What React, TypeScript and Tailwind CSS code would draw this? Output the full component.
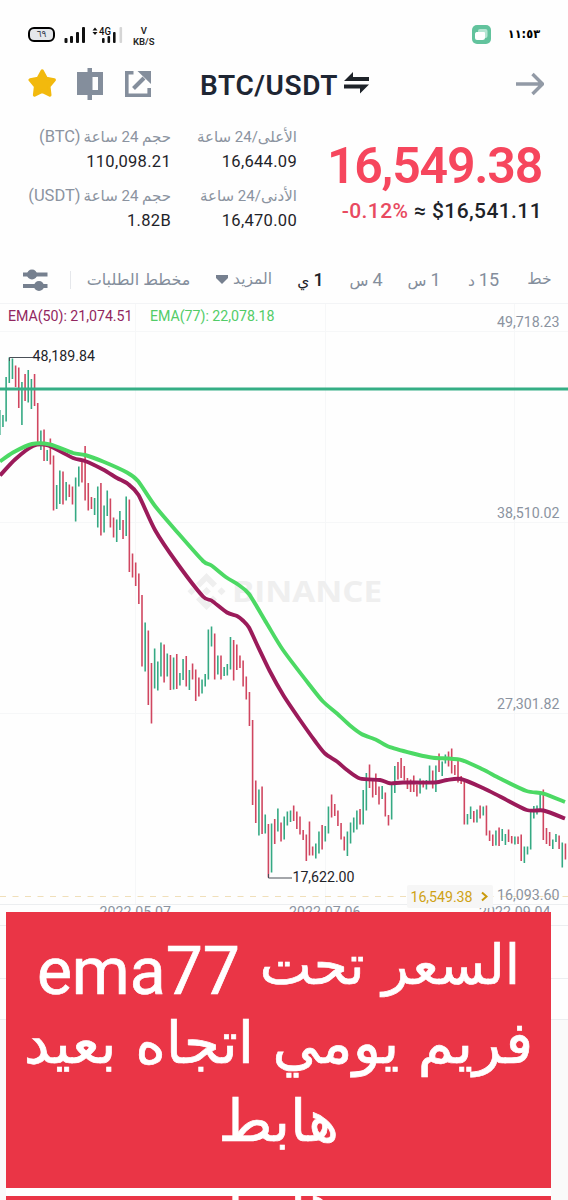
type Candle = [top: number, bottom: number, side: "g" | "r"];
type Point = [x: number, y: number];

const CANDLES: Candle[] = [
  [410, 435, "g"], [415, 427, "g"], [377, 421.5, "g"], [357.5, 383, "g"], [358.5, 379, "g"], [365.5, 387, "r"],
  [367.5, 408, "r"], [382, 425, "g"], [374, 401, "r"], [370, 402.5, "g"], [379, 409, "g"], [374, 406, "r"],
  [403, 442, "r"], [430.5, 450, "g"], [429.5, 461, "r"], [450, 461, "g"], [438.5, 464.5, "r"], [455.5, 510.5, "r"],
  [485, 509, "g"], [470.5, 504, "g"], [471.5, 504.5, "r"], [482, 500.5, "g"], [484.5, 497, "r"], [486.5, 504.5, "r"],
  [477.5, 521.5, "g"], [466.5, 486.5, "g"], [461.5, 482.5, "r"], [446, 500.5, "r"], [483, 510.5, "r"], [497, 509, "r"],
  [498, 515, "g"], [486.5, 527.5, "g"], [483, 535.5, "r"], [505.5, 532.5, "g"], [490.5, 516, "g"], [498.5, 527.5, "r"],
  [517.5, 537.5, "r"], [519.5, 542, "g"], [511, 530, "g"], [520, 539, "r"], [496.5, 536, "g"], [499.5, 572, "r"],
  [553.5, 577.5, "r"], [562.5, 586, "r"], [573.5, 604, "r"], [595, 666.5, "r"], [622.5, 671.5, "g"], [630.5, 705, "r"],
  [663, 723.5, "r"], [648.5, 688.5, "g"], [661.5, 690.5, "g"], [642.5, 676.5, "g"], [644.5, 682.5, "r"], [653.5, 676.5, "g"],
  [655, 690, "r"], [657.5, 689.5, "g"], [654, 689, "r"], [673, 685.5, "g"], [659, 680, "g"], [656, 686.5, "r"],
  [670, 690, "g"], [663.5, 679.5, "r"], [669.5, 701, "r"], [677.5, 696.5, "r"], [679.5, 693.5, "g"], [674, 686.5, "g"],
  [629.5, 679.5, "g"], [626.5, 646.5, "g"], [633.5, 679.5, "r"], [655.5, 674.5, "g"], [655.5, 679.5, "r"], [667, 676, "g"],
  [664, 675.5, "g"], [637, 669.5, "g"], [640, 680.5, "r"], [644.5, 670, "r"], [655.5, 668, "r"], [660.5, 686.5, "r"],
  [676.5, 699.5, "r"], [692, 726, "r"], [720, 805, "r"], [780.5, 823, "r"], [789.5, 835.5, "g"], [786.5, 834, "r"],
  [814.5, 833.5, "g"], [824, 877.5, "r"], [823.5, 872.5, "g"], [819, 844, "r"], [808.5, 831.5, "g"], [822.5, 841.5, "r"],
  [816.5, 839.5, "g"], [811.5, 825.5, "g"], [810.5, 822, "g"], [805.5, 821, "r"], [811.5, 829, "r"], [816.5, 834.5, "r"],
  [830, 840, "r"], [834.5, 861, "r"], [821.5, 855.5, "r"], [846.5, 855.5, "r"], [843.5, 858.5, "g"], [831.5, 853.5, "g"],
  [825, 849.5, "r"], [826, 841.5, "g"], [806.5, 833.5, "g"], [794.5, 817.5, "r"], [804, 816, "r"], [810.5, 826, "r"],
  [823, 839.5, "r"], [836.5, 850.5, "r"], [831.5, 856, "g"], [822.5, 843.5, "g"], [817.5, 832.5, "g"], [810.5, 829.5, "g"],
  [809, 824.5, "r"], [790, 824.5, "g"], [773, 810.5, "g"], [764.5, 788, "r"], [778.5, 797.5, "r"], [773.5, 795, "r"],
  [786.5, 804.5, "r"], [786, 799, "g"], [792.5, 816.5, "r"], [815, 825.5, "r"], [784, 819.5, "g"], [766, 793, "g"],
  [762, 779.5, "r"], [758, 778, "r"], [766, 780.5, "r"], [778, 789, "r"], [779.5, 792, "r"], [775.5, 792, "r"],
  [784.5, 796.5, "r"], [778.5, 793.5, "g"], [780.5, 787.5, "r"], [780, 789.5, "g"], [765.5, 784, "g"], [770.5, 788.5, "r"],
  [765.5, 792, "g"], [753.5, 772, "r"], [761.5, 776, "g"], [754.5, 763.5, "g"], [751.5, 766.5, "r"], [748.5, 773.5, "r"],
  [765, 775, "r"], [760.5, 782.5, "r"], [776, 784, "r"], [781.5, 824.5, "r"], [814, 824.5, "g"], [806.5, 819, "g"],
  [811, 822.5, "r"], [809.5, 822.5, "g"], [805.5, 818.5, "r"], [806.5, 815.5, "g"], [805.5, 835.5, "r"], [830.5, 841, "r"],
  [834.5, 846, "r"], [830.5, 845.5, "g"], [827.5, 846, "r"], [829, 841, "g"], [834, 845, "g"], [829.5, 842, "r"],
  [836, 843.5, "r"], [836.5, 844.5, "g"], [836.5, 844, "r"], [834.5, 861, "r"], [846.5, 863, "g"], [846.5, 854.5, "g"],
  [810, 849.5, "g"], [806, 818.5, "g"], [805.5, 814.5, "g"], [793.5, 811, "g"], [789.5, 840, "r"], [828, 844, "r"],
  [832, 846, "r"], [839.5, 849, "g"], [834, 842, "g"], [835.5, 849, "r"], [842.5, 867.5, "g"], [843.5, 859.5, "r"],
];

const EMA50: Point[] = [
  [0, 475.5], [15, 459.5], [33, 446], [48, 445.5], [73, 458], [85, 461], [103, 469.5], [117, 478], [128, 484],
  [138.5, 495], [155, 530], [177, 563], [203, 596.5], [211.5, 600.5], [227, 612.5], [237, 616], [243.5, 621],
  [249, 627.5], [256.5, 643.5], [270, 671.5], [283.5, 695.5], [300, 720], [315, 741], [325, 753.5], [337, 761.5],
  [347, 770], [360, 778.5], [380, 780], [390, 783.3], [403, 782.5], [435, 782.5], [447, 780], [461, 779],
  [483, 788], [500, 796.5], [526.7, 810], [543.5, 810.5], [565, 818.5],
];

const EMA77: Point[] = [
  [0, 461.5], [13, 452.5], [32, 444], [50, 444.5], [73, 453], [85, 455], [103, 461.5], [127, 472.5], [138, 481],
  [155, 506], [178, 533], [203, 561], [211.5, 565.5], [226.5, 577.5], [238, 584.5], [249, 594], [266.5, 623],
  [283, 650], [310, 685.5], [323, 701.5], [337, 713.5], [350, 725.5], [361.5, 734], [376.5, 740], [390, 747.2],
  [417, 754.5], [433, 757.7], [460, 759.7], [483, 769.5], [500, 778.5], [526.5, 791], [543.5, 793.5], [565, 802],
];

const UP = "#35a983";
const DOWN = "#d04660";

// Catmull-Rom through the points, as cubic beziers
function smoothPath(pts: Point[]) {
  let d = `M${pts[0][0]} ${pts[0][1]}`;
  for (let i = 0; i < pts.length - 1; i++) {
    const p0 = pts[i - 1] ?? pts[i];
    const p1 = pts[i];
    const p2 = pts[i + 1];
    const p3 = pts[i + 2] ?? p2;
    d += `C${p1[0] + (p2[0] - p0[0]) / 8} ${p1[1] + (p2[1] - p0[1]) / 8} ${p2[0] - (p3[0] - p1[0]) / 8} ${p2[1] - (p3[1] - p1[1]) / 8} ${p2[0]} ${p2[1]}`;
  }
  return d;
}

function StatusBar() {
  return (
    <div className="flex h-[68px] items-start px-7 pt-6">
      <div className="mt-[3px] flex h-[15px] w-[27px] items-center justify-center rounded-[6px] border-2 border-black bg-gray-200 font-['DejaVu_Sans'] text-[9px] text-gray-700">
        ٦٩
      </div>
      <svg width="60" height="20" className="ml-[8px]">
        <g fill="#111">
          <rect x="1.5" y="14" width="3" height="5" rx="1" />
          <rect x="7" y="12" width="3" height="7" rx="1" />
          <rect x="13" y="8" width="3" height="11" rx="1" />
          <rect x="19" y="3" width="3" height="16" rx="1" />
          <rect x="39" y="14" width="2.6" height="5" rx="1" />
          <rect x="44.5" y="12" width="2.6" height="7" rx="1" />
          <rect x="50" y="8" width="2.6" height="11" rx="1" />
          <path d="M29.500 6.500 32 3.500l2.500 3zM29.500 8l2.500 3 2.500-3z" />
        </g>
        <rect x="56.5" y="3" width="2.6" height="16" rx="1" fill="#d5d5d5" />
        <text x="36" y="11" fontSize="10.5" fontWeight="500" fontFamily="Roboto" textLength="12" lengthAdjust="spacingAndGlyphs" fill="#111">
          4G
        </text>
      </svg>
      <div className="mt-px ml-[10px] text-center font-[Roboto] text-[9.5px] leading-[11px] font-semibold text-neutral-800">
        V<br />
        KB/S
      </div>
      <svg width="20" height="20" viewBox="0 0 20 20" className="mt-px ml-auto">
        <rect x="1" y="0" width="19" height="19" rx="5" fill="#62c39d" />
        <rect x="7" y="4" width="9.5" height="9" rx="2" fill="#b5e5d2" />
        <path d="M5.500 7h7.500a1 1 0 0 1 1 1v4.500a2.500 2.500 0 0 1-2.500 2.500h-5.500a2 2 0 0 1-2-2v-4a2 2 0 0 1 1.500-2z" fill="#fff" />
      </svg>
      <div className="mt-px ml-[15px] origin-right scale-x-95 font-['DejaVu_Sans'] text-[12px] font-bold text-black">١١:٥٣</div>
    </div>
  );
}

function TitleBar() {
  return (
    <div className="flex h-[52px] items-start pr-6 pl-7">
      <svg width="28" height="30" viewBox="0 0 28 30">
        <path
          d="M14.200 3 18.300 10.500 26.200 12 20.800 18.300 21.800 27 14.200 23.300 6.600 27 7.600 18.300 2.200 12 10.100 10.500z"
          fill="#f2b90d"
          stroke="#f2b90d"
          strokeWidth="3.4"
          strokeLinejoin="round"
        />
      </svg>
      <svg width="26" height="32" className="ml-[21px]" fill="#848e9c">
        <path d="M10.500 0h4.500v4h11v23H15v5h-4.500v-5H0V4h10.500zM15.500 9v13h5.500V9z" fillRule="evenodd" />
      </svg>
      <svg width="26" height="26" className="mt-[3px] ml-[22px]" fill="none" stroke="#848e9c">
        <path d="M8.500 1.800H1.800v22.400h22.400V17" strokeWidth="3.600" />
        <path d="M8.500 17.500 19 7" strokeWidth="4" />
        <path d="M12.500 0H26v13z" fill="#848e9c" stroke="none" />
      </svg>
      <h1 className="ml-[49px] font-[Roboto] text-[28px] leading-9 font-semibold tracking-[0.6px] whitespace-nowrap text-[#1e2633]">
        BTC/USDT
      </h1>
      <svg width="26" height="24" className="mt-[3px] ml-[6px]" fill="#1e2329">
        <path d="M9 1v5h16v4H0zM16 22.500v-5H0v-4h25z" />
      </svg>
      <svg width="28" height="24" className="mt-1 ml-auto" fill="none" stroke="#929aa6" strokeWidth="3.4">
        <path d="M0 12h26M16.500 2l10 10-10 10" />
      </svg>
    </div>
  );
}

interface StatProps {
  label: string;
  unit?: string;
  value: string;
}

function Stat({ label, unit, value }: StatProps) {
  return (
    <div className="flex h-[59px] flex-col items-end whitespace-nowrap">
      <div
        dir="rtl"
        className="flex h-[29px] items-center gap-[3px] font-[Roboto,'DejaVu_Sans'] text-[15px] text-[#8b93a0]"
      >
        <span>{label}</span>
        {unit && <bdi dir="ltr" className="text-[16.5px]">{unit}</bdi>}
      </div>
      <div className="font-[Roboto] text-[16.5px] leading-5 tracking-[0.3px] text-[#1e2329]">{value}</div>
    </div>
  );
}

function Ticker() {
  return (
    <div className="flex h-[135px] pt-[3px] pr-[26px]">
      <div className="w-[171px]">
        <Stat label="حجم 24 ساعة" unit="(BTC)" value="110,098.21" />
        <Stat label="حجم 24 ساعة" unit="(USDT)" value="1.82B" />
      </div>
      <div className="w-[126px]">
        <Stat label="الأعلى/24 ساعة" value="16,644.09" />
        <Stat label="الأدنى/24 ساعة" value="16,470.00" />
      </div>
      <div className="flex flex-1 flex-col items-end font-[Roboto] whitespace-nowrap">
        <div className="mt-[13px] text-[50px] leading-[60px] font-semibold tracking-[-1.2px] text-[#f6465d]">16,549.38</div>
        <div className="mt-px text-[21px] leading-7 font-medium tracking-[0.4px] text-[#1e2329]">
          <span className="text-[#e84a60]">-0.12%</span> ≈ $16,541.11
        </div>
      </div>
    </div>
  );
}

function Intervals() {
  return (
    <div className="flex h-[49px] items-center border-b border-gray-100 pt-0.5 pr-4 pl-[23px] font-[Roboto,'DejaVu_Sans'] text-[15.5px] whitespace-nowrap text-[#848e9c]">
      <svg width="25" height="24" stroke="#76808f" strokeWidth="4.2" fill="#76808f">
        <path d="M0 6.500h24.500M0 18h24.500" />
        <circle cx="9" cy="6.5" r="3" />
        <circle cx="16" cy="18" r="3" />
      </svg>
      <span className="ml-[22px] h-[18px] w-px bg-gray-200" />
      <div dir="rtl" className="flex flex-1 items-center">
        <span className="flex w-[25px] justify-center">خط</span>
        <span className="ms-[27px] flex w-[33px] items-baseline justify-center gap-1">
          <b className="text-[18px] font-normal">15</b>د
        </span>
        <span className="ms-[28px] flex w-[30px] items-baseline justify-center gap-1">
          <b className="text-[18px] font-normal">1</b>س
        </span>
        <span className="ms-[26px] flex w-[34px] items-baseline justify-center gap-1">
          <b className="text-[18px] font-normal">4</b>س
        </span>
        <span className="ms-[27px] flex w-[23px] items-baseline justify-center gap-1 font-medium text-[#1e2329]">
          <b className="text-[18px] font-medium">1</b>ي
        </span>
        <span className="ms-[27px] flex w-[57px] items-center justify-between">
          المزيد
          <svg width="14" height="10" fill="#76808f" className="shrink-0">
            <path d="M1 0h12v3L7 9 1 3z" />
          </svg>
        </span>
        <span className="ms-[25px] flex w-[103px] justify-center text-[16px]">مخطط الطلبات</span>
      </div>
    </div>
  );
}

function Chart() {
  return (
    <svg width="568" height="896" viewBox="0 304 568 896" className="block font-[Roboto]">
      <rect x="0" y="1019" width="568" height="181" fill="#fafafa" />
      <path d="M0 331.500H568M0 522.500H568M0 713.500H568M135.500 304V904M325.500 304V904M514.500 304V904" stroke="#f6f7f8" />
      <path d="M0 904.500H568M0 925.500H568M0 978.500H568M0 1019.500H568" stroke="#eceef0" />

      {/* watermark */}
      <g fill="#efefef">
        <g transform="translate(206.500 591)">
          <path d="M-10.500-7.500 0-18 10.500-7.500 6.500-3.500 0-10-6.500-3.500zM-10.500 8.500 0 19 10.500 8.500 6.500 4.500 0 11-6.500 4.500z" />
          <path d="M0-4 4.300.3 0 4.600-4.300.3zM-15-3.700-11 .3-15 4.300-19 .3zM15-3.700 19 .3 15 4.300 11 .3z" />
        </g>
        <text x="232" y="602" fontSize="29" fontWeight="700" fontFamily="Open Sans" textLength="150" lengthAdjust="spacingAndGlyphs">
          BINANCE
        </text>
      </g>

      {CANDLES.map(([top, bottom, side], i) => (
        <line
          key={i}
          x1={-0.2 + i * 3.16}
          x2={-0.2 + i * 3.16}
          y1={top}
          y2={bottom}
          stroke={side === "g" ? UP : DOWN}
          strokeWidth="1.6"
        />
      ))}

      <line x1="0" x2="568" y1="389" y2="389" stroke="#35ae85" strokeWidth="3.2" />
      <g fill="none" strokeWidth="3.9" strokeLinejoin="round">
        <path d={smoothPath(EMA50)} stroke="#9b1b5a" />
        <path d={smoothPath(EMA77)} stroke="#4cd964" />
      </g>

      {/* high / low markers */}
      <path d="M9.500 361V357.500H33M268.500 874V878H292" fill="none" stroke="#4a4f57" />
      <g fontSize="14.2" fill="#1e2329">
        <text x="32.5" y="361" textLength="62.5">48,189.84</text>
        <text x="292.5" y="882" textLength="62">17,622.00</text>
      </g>
      <g fontSize="14.2">
        <text x="8" y="321" textLength="124.5" fill="#92265f">EMA(50): 21,074.51</text>
        <text x="150" y="321" textLength="124.5" fill="#52cc68">EMA(77): 22,078.18</text>
      </g>

      {/* price and date axes */}
      <path d="M0 896.500H568" stroke="#f0dfb9" strokeDasharray="6 6.500" />
      <g fontSize="14.2" fill="#8b93a0">
        <text x="497" y="327" textLength="62.5">49,718.23</text>
        <text x="497" y="517.5" textLength="62.5">38,510.02</text>
        <text x="497" y="708.5" textLength="62.5">27,301.82</text>
        <text x="497" y="899.5" textLength="62.5">16,093.60</text>
        <text x="99.5" y="916.5" textLength="71.5">2022.05.07</text>
        <text x="289" y="916.5" textLength="71.5">2022.07.06</text>
        <text x="479" y="916.5" textLength="71.5">2022.09.04</text>
      </g>
      <rect x="407" y="885" width="86" height="23" rx="2" fill="#f6f6f6" />
      <text x="410.5" y="902" fontSize="14.2" textLength="62" fill="#cfa215">16,549.38</text>
      <path d="M482 892.500l4.500 4-4.500 4" fill="none" stroke="#c99a0c" strokeWidth="2" />
    </svg>
  );
}

function Caption() {
  return (
    <div className="absolute top-[912px] left-[6px] h-[288px] w-[545px] overflow-hidden bg-white font-['DejaVu_Sans'] text-[58.5px] leading-[78px] text-white [-webkit-text-stroke:0.7px_white]">
      <div dir="rtl" className="h-[276px] bg-[#ea3546] pt-[14px] text-center whitespace-nowrap">
        <div className="flex h-[78px] items-baseline justify-center gap-5">
          <span className="-translate-y-[3px] text-[55px]">السعر تحت</span>
          <span className="translate-y-[7px] font-[Roboto] text-[66px]">ema77</span>
        </div>
        <div>فريم يومي اتجاه بعيد</div>
        <div>هابط</div>
      </div>
      <div className="mt-2 h-1 overflow-hidden bg-[#ea3546]">
        <div dir="rtl" className="-mt-[31px] text-center">هابط</div>
      </div>
    </div>
  );
}

export default function App() {
  return (
    <div className="relative h-[1200px] w-[568px] overflow-hidden bg-[#fefefe]">
      <StatusBar />
      <TitleBar />
      <Ticker />
      <Intervals />
      <Chart />
      <Caption />
    </div>
  );
}
